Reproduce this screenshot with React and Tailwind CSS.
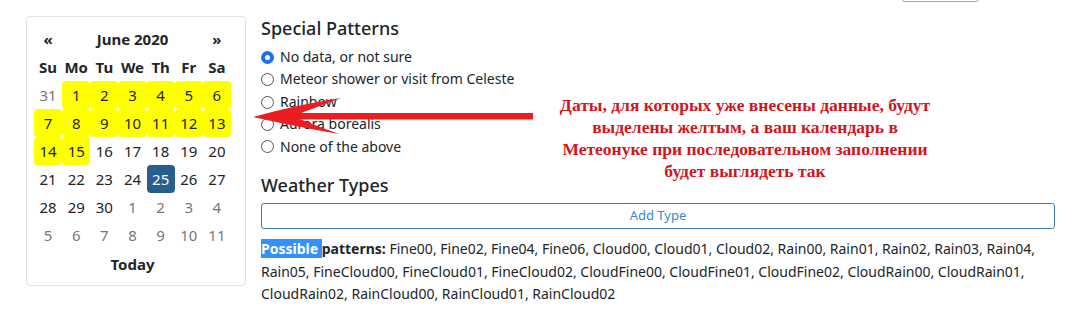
import React from 'react';

const font = { fontFamily: '"Noto Sans", "Open Sans", sans-serif' };

const weeks = [
    [[31, 'out'], [1, 'done'], [2, 'done'], [3, 'done'], [4, 'done'], [5, 'done'], [6, 'done']],
    [[7, 'done'], [8, 'done'], [9, 'done'], [10, 'done'], [11, 'done'], [12, 'done'], [13, 'done']],
    [[14, 'done'], [15, 'done'], [16, ''], [17, ''], [18, ''], [19, ''], [20, '']],
    [[21, ''], [22, ''], [23, ''], [24, ''], [25, 'active'], [26, ''], [27, '']],
    [[28, ''], [29, ''], [30, ''], [1, 'out'], [2, 'out'], [3, 'out'], [4, 'out']],
    [[5, 'out'], [6, 'out'], [7, 'out'], [8, 'out'], [9, 'out'], [10, 'out'], [11, 'out']],
];

const dayClass = (kind) => {
    switch (kind) {
        case 'done': return 'bg-[#ffff00] text-[#212529] rounded-[4px]';
        case 'active': return 'bg-[#285e8e] text-white rounded-[4px]';
        case 'out': return 'text-[#777777]';
        default: return 'text-[#212529]';
    }
};

const Calendar = () => (
    <div className="w-[220px] h-[270px] shrink-0 border border-[#e2e2e2] rounded-[4px] bg-white pl-[7px] pt-[8px]">
        <div className="grid grid-cols-7 w-[197px] text-[15px] leading-[28px] text-center">
            <div className="h-[28px] font-bold">«</div>
            <div className="col-span-5 h-[28px] font-bold">June 2020</div>
            <div className="h-[28px] font-bold">»</div>
            {['Su', 'Mo', 'Tu', 'We', 'Th', 'Fr', 'Sa'].map(d => (
                <div key={d} className="h-[28px] font-bold text-[#212529]">{d}</div>
            ))}
            {weeks.flat().map(([n, kind], i) => (
                <div key={i} className={`h-[28px] ${dayClass(kind)}`}>{n}</div>
            ))}
            <div className="col-span-7 h-[28px] font-bold leading-[30px]">Today</div>
        </div>
    </div>
);

const patterns = [
    ['No data, or not sure', true],
    ['Meteor shower or visit from Celeste', false],
    ['Rainbow', false],
    ['Aurora borealis', false],
    ['None of the above', false],
];

const Radio = ({ checked }) => (
    checked ? (
        <span className="w-[13px] h-[13px] rounded-full bg-[#1a73e8] flex items-center justify-center shrink-0">
            <span className="w-[5px] h-[5px] rounded-full bg-white" />
        </span>
    ) : (
        <span className="w-[13px] h-[13px] rounded-full border border-[#555] bg-white shrink-0" />
    )
);

const Arrow = () => (
    <svg className="absolute left-0 top-0" width="1080" height="312" viewBox="0 0 1080 312">
        <rect x="285" y="113" width="248" height="6.5" fill="#ea1d22" />
        <path d="M253 117 Q300 104 341 98 Q310 110 292 116 Q312 124 339 134 Q298 127 253 117 Z" fill="#ea1d22" />
    </svg>
);

const App = () => {
    return (
        <div className="relative w-[1080px] h-[312px] bg-white overflow-hidden text-[#212529]" style={font}>
            <div className="flex gap-[15px] pl-[26px] pt-[16px]">
                <Calendar />
                <div className="w-[794px]">
                    <h5 className="text-[18px] leading-[24px] font-medium">Special Patterns</h5>
                    <div className="mt-[6px] flex flex-col text-[14px] leading-[22.4px]">
                        {patterns.map(([label, checked]) => (
                            <label key={label} className="flex items-center gap-[6px]">
                                <Radio checked={checked} />
                                <span>{label}</span>
                            </label>
                        ))}
                    </div>
                    <h5 className="mt-[15px] text-[18px] leading-[24px] font-medium">Weather Types</h5>
                    <button className="mt-[6px] w-full h-[26px] border border-[#3b7fb6] rounded-[3px] text-[13px] text-[#3a87cc] bg-white">
                        Add Type
                    </button>
                    <div className="mt-[9px] text-[14px] leading-[22.5px]">
                        <div className="whitespace-nowrap">
                            <span className="font-bold bg-[#3390ff] text-white">Possible </span>
                            <span className="font-bold">patterns:</span> Fine00, Fine02, Fine04, Fine06, Cloud00, Cloud01, Cloud02, Rain00, Rain01, Rain02, Rain03, Rain04,
                        </div>
                        <div className="whitespace-nowrap">
                            Rain05, FineCloud00, FineCloud01, FineCloud02, CloudFine00, CloudFine01, CloudFine02, CloudRain00, CloudRain01,
                        </div>
                        <div className="whitespace-nowrap">
                            CloudRain02, RainCloud00, RainCloud01, RainCloud02
                        </div>
                    </div>
                </div>
            </div>

            {/* button cut off at the top of the shot */}
            <div className="absolute left-[902px] top-[-6px] w-[77px] h-[8px] border border-[#a8a8a8] rounded-[3px]" />

            <Arrow />

            <div
                className="absolute left-[520px] top-[94px] w-[450px] text-center text-[17.5px] leading-[22px] font-bold text-[#d4141c]"
                style={{ fontFamily: '"Liberation Serif", "DejaVu Serif", serif' }}
            >
                Даты, для которых уже внесены данные, будут<br />
                выделены желтым, а ваш календарь в<br />
                Метеонуке при последовательном заполнении<br />
                будет выглядеть так
            </div>
        </div>
    );
};

export default App;
